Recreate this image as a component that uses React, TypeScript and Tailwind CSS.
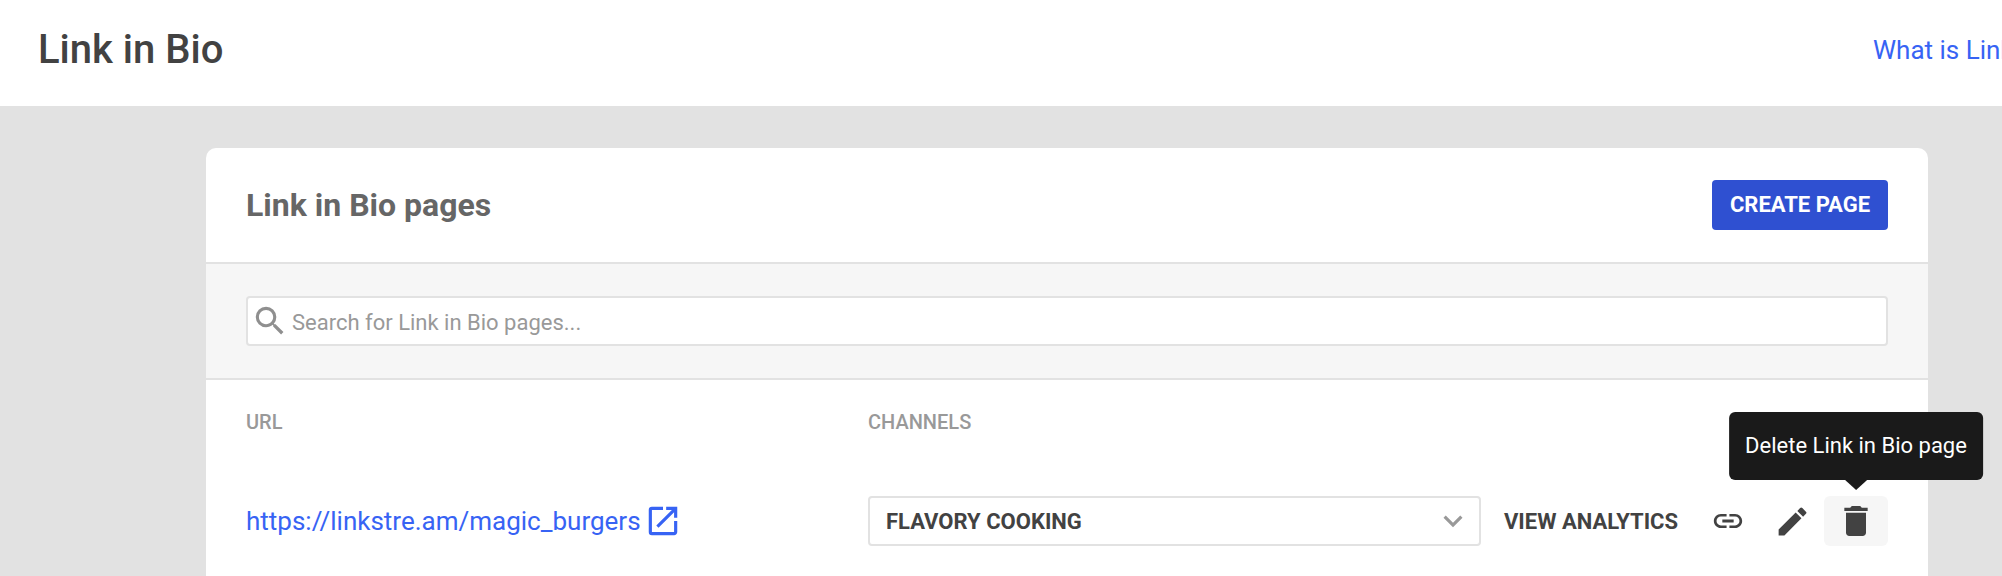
import { MdDelete, MdEdit, MdExpandMore, MdLink, MdOpenInNew, MdSearch } from 'react-icons/md'

export default function App() {
  return (
    <div className="h-[576px] w-[2002px] overflow-hidden bg-[#e2e2e2] font-['Roboto',sans-serif]">
      <header className="flex h-[106px] items-center justify-between overflow-hidden bg-white pb-[6px] pl-[38px]">
        <h1 className="text-[40px] leading-none font-medium text-[#424242]">Link in Bio</h1>
        <a href="#" className="w-[129px] shrink-0 overflow-hidden text-[26px] whitespace-nowrap text-[#3763f4]">
          What is Link in Bio?
        </a>
      </header>

      <main className="pt-[42px] pl-[206px]">
        <section className="h-[600px] w-[1722px] rounded-t-[10px] bg-white">
          <div className="flex h-[116px] items-center justify-between border-b-2 border-[#e2e2e2] px-10">
            <h2 className="text-[32px] font-bold text-[#666666]">Link in Bio pages</h2>
            <button className="h-[50px] w-[176px] rounded-[4px] bg-[#2f50d1] pb-[2px] text-[22px] font-bold text-white">
              CREATE PAGE
            </button>
          </div>

          <div className="border-b-2 border-[#e2e2e2] bg-[#f6f6f6] px-10 py-8">
            <div className="flex h-[50px] items-center gap-[3px] rounded-[4px] border-2 border-[#e2e2e2] bg-white pl-[3px]">
              <MdSearch className="h-[38px] w-[38px] text-[#8f8f8f]" />
              <span className="pt-[2px] text-[22px] text-[#999999]">Search for Link in Bio pages...</span>
            </div>
          </div>

          <div className="flex h-[84px] items-center px-10 text-[20px] font-medium text-[#999999]">
            <span className="w-[622px]">URL</span>
            <span>CHANNELS</span>
          </div>

          <div className="flex items-center px-10 pt-8">
            <div className="flex w-[622px] items-center gap-[3px]">
              <a href="#" className="text-[26px] text-[#3763f4]">https://linkstre.am/magic_burgers</a>
              <MdOpenInNew className="h-[38px] w-[38px] text-[#3763f4]" />
            </div>
            <div className="flex h-[50px] w-[613px] items-center justify-between rounded-[4px] border-2 border-[#e2e2e2] pr-[7px] pl-4 text-[22px] font-bold text-[#424242]">
              FLAVORY COOKING
              <MdExpandMore className="h-[38px] w-[38px] text-[#999999]" />
            </div>
            <span className="ml-[23px] text-[22px] font-bold whitespace-nowrap text-[#424242]">VIEW ANALYTICS</span>
            <div className="ml-auto flex items-center text-[#424242]">
              <span className="grid h-[50px] w-16 place-items-center"><MdLink className="h-[34px] w-[34px]" /></span>
              <span className="grid h-[50px] w-16 place-items-center"><MdEdit className="h-[37px] w-[37px]" /></span>
              <span className="relative grid h-[50px] w-16 place-items-center rounded-[6px] bg-[#f6f6f6]">
                <MdDelete className="h-10 w-10" />
                <span className="absolute bottom-[66px] left-1/2 -translate-x-1/2 rounded-[6px] bg-[#1a1a1a] px-4 py-[17px] text-[22px] leading-[34px] whitespace-nowrap text-white">
                  Delete Link in Bio page
                  <span className="absolute -bottom-[10px] left-1/2 h-0 w-0 -translate-x-1/2 border-x-[11px] border-t-[10px] border-x-transparent border-t-[#1a1a1a]" />
                </span>
              </span>
            </div>
          </div>
        </section>
      </main>
    </div>
  )
}
